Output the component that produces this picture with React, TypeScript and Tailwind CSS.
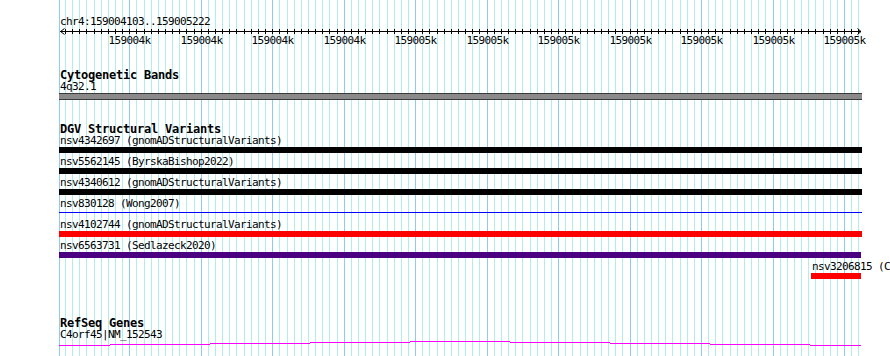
import React from "react";

const MONO = "font-['DejaVu_Sans_Mono',monospace]";

// grid positions: every 10bp, darker line every 100bp
const gridX = Array.from({ length: 113 }, (_, i) =>
  i === 0 ? 59 : Math.round(57.8 + i * 7.147)
);

const variants = [
  { label: "nsv4342697 (gnomADStructuralVariants)", kind: "bar", color: "bg-black" },
  { label: "nsv5562145 (ByrskaBishop2022)", kind: "bar", color: "bg-black" },
  { label: "nsv4340612 (gnomADStructuralVariants)", kind: "bar", color: "bg-black" },
  { label: "nsv830128 (Wong2007)", kind: "line", color: "bg-[#0000ff]" },
  { label: "nsv4102744 (gnomADStructuralVariants)", kind: "bar", color: "bg-[#ff0000]" },
  { label: "nsv6563731 (Sedlazeck2020)", kind: "bar", color: "bg-[#4b0082]" },
];

const geneSegs = [
  [59, 110, 345],
  [110, 210, 344],
  [210, 310, 343],
  [310, 410, 342],
  [410, 510, 341],
  [510, 610, 342],
  [610, 710, 343],
  [710, 810, 344],
  [810, 861, 345],
];

function Grid() {
  return (
    <svg className="absolute inset-0" width={890} height={356}>
      {gridX.map((x, i) => (
        <rect
          key={i}
          x={x}
          y={0}
          width={1}
          height={356}
          fill={i % 10 === 0 ? "#8ccbf2" : "#b2eded"}
        />
      ))}
    </svg>
  );
}

function Ruler() {
  return (
    <svg width={803} height={18} className="block overflow-visible">
      <rect x={1} y={3} width={801} height={1} fill="#000" />
      <path d="M5.5 0.5 L1.5 3.5 L5.5 6.5" stroke="#000" fill="none" />
      <path d="M798.5 0.5 L802 3.5 L798.5 6.5" stroke="#000" fill="none" />
      {gridX.slice(1).map((x, i) => (
        <rect key={i} x={x - 59} y={1} width={1} height={5} fill="#000" />
      ))}
      {Array.from({ length: 11 }, (_, k) => (
        <text
          key={k}
          x={gridX[(k + 1) * 10] - 59 + 0.5}
          y={16}
          textAnchor="middle"
          fontFamily="DejaVu Sans Mono, monospace"
          fontSize={11}
          letterSpacing={-0.6}
          fill="#000"
        >
          {k < 4 ? "159004k" : "159005k"}
        </text>
      ))}
    </svg>
  );
}

function Label({ children, bold }: { children: React.ReactNode; bold?: boolean }) {
  return (
    <div
      className={
        bold
          ? `${MONO} h-[12px] pl-px text-[12px] leading-[12px] font-bold tracking-[-0.22px] whitespace-nowrap text-black`
          : `${MONO} h-[12px] pl-px text-[11px] leading-[12px] tracking-[-0.62px] whitespace-nowrap text-black`
      }
    >
      {children}
    </div>
  );
}

export default function App() {
  return (
    <div className="relative w-[890px] h-[356px] overflow-hidden bg-white">
      <Grid />
      <div className="relative ml-[59px] w-[803px] pt-[16px]">
        <Label>chr4:159004103..159005222</Label>
        <Ruler />

        {/* Cytogenetic Bands */}
        <div className="mt-[23px]">
          <Label bold>Cytogenetic Bands</Label>
          <Label>4q32.1</Label>
          <div className="h-[7px] border-y border-[#3a3a3a] bg-[#8a8a8a]" />
        </div>

        {/* DGV Structural Variants */}
        <div className="mt-[23px]">
          <Label bold>DGV Structural Variants</Label>
          <div className="flex flex-col gap-[3px]">
            {variants.map((v) => (
              <div key={v.label}>
                <Label>{v.label}</Label>
                {v.kind === "bar" ? (
                  <div className={`h-[6px] ${v.color} ${v.color === "bg-[#4b0082]" ? "w-[802px]" : "w-full"}`} />
                ) : (
                  <div className="h-[6px] pt-[2px]">
                    <div className={`h-px ${v.color}`} />
                  </div>
                )}
              </div>
            ))}
            <div className="ml-[752px] w-[50px]">
              <Label>nsv3206815 (Chaisson2019)</Label>
              <div className="h-[6px] bg-[#ff0000]" />
            </div>
          </div>
        </div>

        {/* RefSeq Genes */}
        <div className="mt-[38px]">
          <Label bold>RefSeq Genes</Label>
          <Label>C4orf45|NM_152543</Label>
          <svg width={803} height={6} className="block">
            {geneSegs.map(([a, b, y], i) => (
              <rect key={i} x={a - 59} y={y - 341} width={b - a} height={1} fill="#ff00ff" />
            ))}
          </svg>
        </div>
      </div>
    </div>
  );
}
